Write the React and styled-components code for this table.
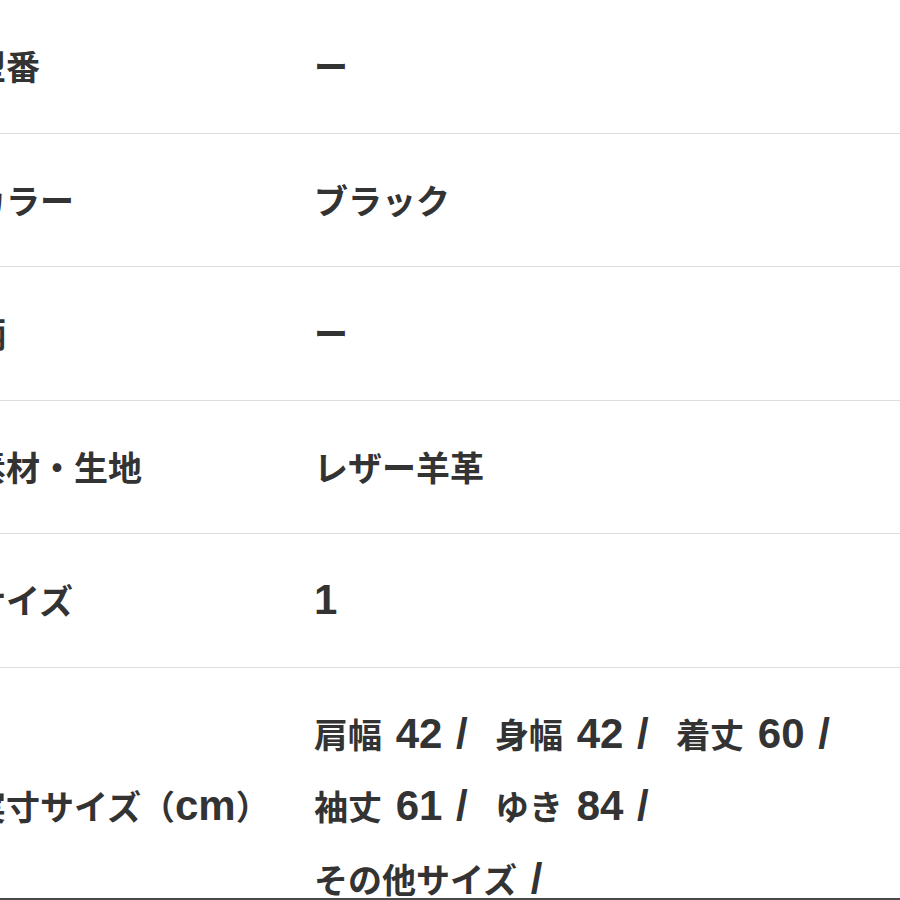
import React from "react";
import styled, { createGlobalStyle } from "styled-components";

const GlobalStyle = createGlobalStyle`
  html, body {
    margin: 0;
    padding: 0;
    background: #fff;
  }
`;

const specs = [
  { label: "型番", value: ["ー"] },
  { label: "カラー", value: ["ブラック"] },
  { label: "柄", value: ["ー"] },
  { label: "素材・生地", value: ["レザー羊革"] },
  { label: "サイズ", value: ["1"] },
  {
    label: "実寸サイズ（cm）",
    value: [
      "肩幅 42 /\u00a0 身幅 42 /\u00a0 着丈 60 /",
      "袖丈 61 /\u00a0 ゆき 84 /",
      "その他サイズ /",
    ],
  },
];

// latin runs render a bit larger, like the original's system font
function Mixed({ text }) {
  const parts = text.split(/([\x20-\x7e\u00a0]+)/).filter(Boolean);
  return parts.map((part, i) =>
    /^[\x20-\x7e\u00a0]+$/.test(part) ? <Latin key={i}>{part}</Latin> : <span key={i}>{part}</span>
  );
}

function App() {
  return (
    <>
      <GlobalStyle />
      <Page>
        <Table>
          {specs.map((row) => (
            <Row key={row.label}>
              <Label>
                <Mixed text={row.label} />
              </Label>
              <Value>
                {row.value.map((line) => (
                  <Line key={line}>
                    <Mixed text={line} />
                  </Line>
                ))}
              </Value>
            </Row>
          ))}
        </Table>
      </Page>
    </>
  );
}

const Page = styled.div`
  width: 900px;
  height: 900px;
  box-sizing: border-box;
  overflow: hidden;
  border-bottom: 2px solid #4a4a4a;
  font-family: "Noto Sans CJK JP", sans-serif;
  font-weight: 700;
  font-size: 34px;
  color: #333;
`;

const Table = styled.div`
  margin-left: -28px;
  display: flex;
  flex-direction: column;
`;

const Row = styled.div`
  display: grid;
  grid-template-columns: 342px 1fr;
  align-items: center;
  padding: 30px 0;
  border-bottom: 1px solid #dedede;
`;

const Label = styled.div`
  line-height: 72.5px;
  white-space: nowrap;
`;

const Value = styled.div`
  display: flex;
  flex-direction: column;
`;

const Line = styled.div`
  line-height: 72.5px;
  white-space: nowrap;
`;

const Latin = styled.span`
  font-family: "Liberation Sans", Arial, sans-serif;
  font-size: 42px;
  line-height: 1;
  word-spacing: 2px;
`;

export default App;
